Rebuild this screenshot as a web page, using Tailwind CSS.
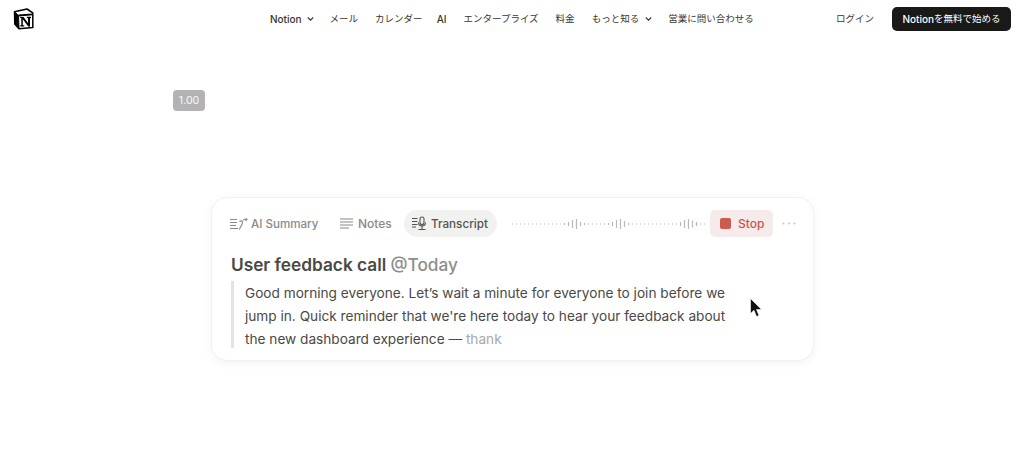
<!DOCTYPE html>
<html lang="ja">
<head>
<meta charset="utf-8">
<title>Notion</title>
<script src="https://cdn.jsdelivr.net/npm/@tailwindcss/browser@4"></script>
</head>
<body class="relative h-[460px] w-[1024px] overflow-hidden bg-white font-['Inter','Noto_Sans_CJK_JP',sans-serif] text-[#37352f]">
  <header class="flex h-[38px] items-center pl-[13px] pr-[13px]">
    <svg class="h-[22px] w-[21px] shrink-0" viewBox="0 0 21 22">
      <path d="M1.500 3.800 14 1 19.800 4.800V19.500L6 20.800 1.800 16Z" fill="#fff" stroke="#000" stroke-width="1.500" stroke-linejoin="round"/>
      <path d="M1.500 3.800 5.500 7.500 6 20.800 1.800 16Z" fill="#000" stroke="#000" stroke-width="1"/>
      <path d="M5.500 7.500 19.800 6.300" stroke="#000" stroke-width="1.800" fill="none"/>
      <path d="M7.200 9H10.600L15 15V10.300L13.800 10V8.800H18V10L17 10.300V18.600H15.200L9.800 11.200V17L11.300 17.400V18.600H7.200V17.400L8.300 17V10.200L7.200 10Z" fill="#000"/>
    </svg>
    <nav class="ml-[236px] flex items-center whitespace-nowrap text-[9.500px] text-[#37352f]">
      <a class="flex items-center text-[10px] font-medium">Notion<svg class="ml-[5px] h-[6px] w-[7px]" viewBox="0 0 7 6"><path d="M.8 1.500 3.500 4.200 6.200 1.500" fill="none" stroke="#37352f" stroke-width="1.100"/></svg></a>
      <a class="ml-[16px]">メール</a>
      <a class="ml-[17px]">カレンダー</a>
      <a class="ml-[14px] text-[10px] font-medium">AI</a>
      <a class="ml-[17px]">エンタープライズ</a>
      <a class="ml-[17px]">料金</a>
      <a class="ml-[17px] flex items-center">もっと知る<svg class="ml-[6px] h-[6px] w-[7px]" viewBox="0 0 7 6"><path d="M.8 1.500 3.500 4.200 6.200 1.500" fill="none" stroke="#37352f" stroke-width="1.100"/></svg></a>
      <a class="ml-[16px]">営業に問い合わせる</a>
    </nav>
    <a class="ml-auto text-[9.500px]">ログイン</a>
    <a class="ml-[18px] flex h-[24px] w-[119px] items-center justify-center rounded-[5px] bg-[#191918] text-[9.500px] text-white"><span class="text-[10px] font-medium">Notion</span>を無料で始める</a>
  </header>

  <div class="absolute left-[173px] top-[90px] flex h-[21px] w-[32px] items-center justify-center rounded-[4px] bg-[#b3b3b3] text-[10.500px] text-white/90">1.00</div>

  <main class="ml-[211px] mt-[159px] h-[164px] w-[603px] rounded-[16px] border border-[#f1f1f0] bg-white px-[18px] pt-[12px] shadow-[0_2px_10px_rgba(0,0,0,0.05)]">
    <div class="flex h-[27px] items-center whitespace-nowrap text-[12px] font-medium text-[#8a8987]">
      <div class="flex w-[88px] shrink-0 items-center">
        <svg class="h-[14px] w-[18px] shrink-0" viewBox="0 0 18 14" fill="none" stroke="#8a8987" stroke-width="1.100"><path d="M0 2.500H7M0 5.500H7M0 8.500H6M0 11.500H8M9.500 12.500C9.500 10 12.500 8.500 12.500 5.500C12.500 3.500 10.500 3.500 9.500 4.500M13 3.500C14 2 15 2 16 3M16 1 16.300 2.200 17.500 2.500 16.300 2.800 16 4"/></svg>
        <span class="ml-[3px] text-[11.600px] leading-[16px]">AI Summary</span>
      </div>
      <div class="ml-[22px] flex w-[52px] shrink-0 items-center">
        <svg class="h-[11px] w-[14px] shrink-0" viewBox="0 0 14 11" fill="none" stroke="#8a8987" stroke-width="1.100"><path d="M0 1H13M0 4H13M0 7H13M0 10H9"/></svg>
        <span class="ml-[4px] leading-[16px]">Notes</span>
      </div>
      <div class="ml-[12px] flex h-[27px] w-[93px] shrink-0 items-center rounded-full bg-[#f1f1f0] pl-[8px] text-[#55534e]">
        <svg class="h-[15px] w-[16px] shrink-0" viewBox="0 0 16 15" fill="none" stroke="#55534e" stroke-width="1.100"><path d="M0 2.500H5.500M0 5.500H5.500M0 8.500H5.500M0 11H4"/><rect x="8" y="1" width="4" height="7.500" rx="2"/><path d="M6.500 6.500C6.500 11 13.500 11 13.500 6.500M10 10V13M6.500 13.500H13.500"/></svg>
        <span class="ml-[3px] text-[11.700px] leading-[16px]">Transcript</span>
      </div>
      <svg class="ml-[15px] h-[14px] w-[193px] shrink-0" viewBox="0 0 193 14">
        <path stroke="#b9b9b7" stroke-width="1.200" d="M.5 6.500V7.500M4.500 6.500V7.500M8.500 6.500V7.500M12.500 6.500V7.500M16.500 6.500V7.500M20.500 6.500V7.500M24.500 6.500V7.500M28.500 6.500V7.500M32.500 6.500V7.500M36.500 6.500V7.500M40.500 6.500V7.500M44.500 6.500V7.500M48.500 6.500V7.500M52.500 6V8M56.500 5V9M60.500 3V11M64.500 2V12M68.500 5V9M72.500 6V8M76.500 6.500V7.500M80.500 6.500V7.500M84.500 6.500V7.500M88.500 6.500V7.500M92.500 6.500V7.500M96.500 6V8M100.500 5V9M104.500 3V11M108.500 2V12M112.500 4V10M116.500 6V8M120.500 6.500V7.500M124.500 6.500V7.500M128.500 6.500V7.500M132.500 6.500V7.500M136.500 6.500V7.500M140.500 6.500V7.500M144.500 6.500V7.500M148.500 6.500V7.500M152.500 6.500V7.500M156.500 6.500V7.500M160.500 6.500V7.500M164.500 6.500V7.500M168.500 5V9M172.500 3V11M176.500 2V12M180.500 3.500V10.500M184.500 5V9M188.500 6.500V7.500M192.500 6.500V7.500"/>
      </svg>
      <div class="ml-[5px] flex h-[27px] w-[63px] shrink-0 items-center rounded-[5px] bg-[#f7eaea] pl-[10px] text-[#c9564c]">
        <span class="h-[11px] w-[11px] shrink-0 rounded-[2px] bg-[#cb5a50]"></span>
        <span class="ml-[7px] leading-[16px]">Stop</span>
      </div>
      <svg class="ml-[9px] h-[3px] w-[14px] shrink-0" viewBox="0 0 14 3" fill="#c4c4c2"><circle cx="1.500" cy="1.500" r="1"/><circle cx="7" cy="1.500" r="1"/><circle cx="12.500" cy="1.500" r="1"/></svg>
    </div>
    <h2 class="ml-[1px] mt-[17px] whitespace-nowrap text-[17.250px] leading-[22px] font-semibold text-[#4a4946]">User feedback call <span class="font-medium text-[#8f8e8c]">@Today</span></h2>
    <blockquote class="ml-[1px] mt-[5px] h-[67px] whitespace-nowrap border-l-[3px] border-[#e3e3e2] pl-[11px] pt-[1px] text-[13.650px] leading-[23px] text-[#4a4946]">
      <p>Good morning everyone. Let’s wait a minute for everyone to join before we</p>
      <p>jump in. Quick reminder that we're here today to hear your feedback about</p>
      <p>the new dashboard experience — <span class="text-[#a9a8a6]">thank</span></p>
    </blockquote>
  </main>

  <svg class="absolute left-[750px] top-[298px] h-[20px] w-[13px]" viewBox="0 0 13 20"><path d="M.5.500V15.500L4 12.300 6.500 18.500 9 17.500 6.500 11.500H11.500Z" fill="#111" stroke="#fff" stroke-width=".6"/></svg>
</body>
</html>
